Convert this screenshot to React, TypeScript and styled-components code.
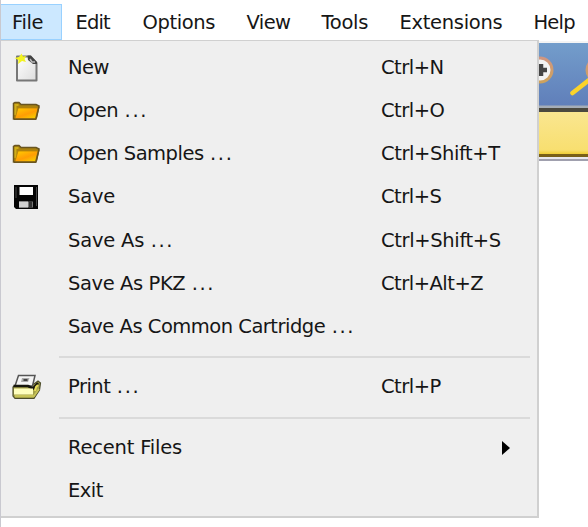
import React from 'react';
import styled, { createGlobalStyle } from 'styled-components';

const Global = createGlobalStyle`
  * { box-sizing: border-box; }
  body { margin: 0; background: #fff; overflow: hidden; }
`;

const Window = styled.div`
  position: relative;
  width: 588px;
  height: 527px;
  overflow: hidden;
  background: #fff;
  color: #161616;
  font: 19.5px/24px 'DejaVu Sans', sans-serif;
  border-left: 1px solid #c9c9d0;
`;

const MenuBar = styled.nav`
  display: flex;
  height: 43px;
  padding-top: 4px;
  margin-left: -1px;
  border-bottom: 2px solid #f4f4f4;
`;

const MenuTitle = styled.div<{ $width: number; $active?: boolean }>`
  flex: none;
  width: ${p => p.$width}px;
  height: 36px;
  padding: ${p => (p.$active ? '6px 0 0 12px' : '7px 0 0 14px')};
  white-space: nowrap;
  background: ${p => (p.$active ? '#cce8ff' : 'transparent')};
  border: ${p => (p.$active ? '1.5px solid #99d1ff' : '0')};
  border-left-width: 0;
`;

const Label = styled.span<{ $spacing?: number }>`
  letter-spacing: ${p => p.$spacing ?? -0.5}px;
  white-space: pre;
`;

const Dots = styled.span`
  margin-left: 6.5px;
  letter-spacing: 1.6px;
`;

const ToolStrip = styled.div`
  display: flex;
  justify-content: flex-end;
  height: 65px;
  background: linear-gradient(#739dcb, #607fba 62px, #a5adb7 63px);
`;

const YellowStrip = styled.div`
  height: 49px;
  border-top: 4px solid #4b493f;
  border-bottom: 3px solid #786019;
  background: linear-gradient(#fae690, #f8df70 38px, #efce36);
`;

const StripEdge = styled.div`
  height: 4px;
  border-bottom: 2px solid #a0a0ae;
  background: #e8e8ee;
`;

const Popup = styled.div`
  position: absolute;
  top: 40px;
  left: -1px;
  width: 539px;
  height: 478px;
  padding-top: 5.4px;
  background: #efefef;
  border: 2px solid #d0d0d0;
  border-top-width: 1px;
  border-left: 1px solid #ddd;
`;

const Row = styled.div`
  display: grid;
  grid-template-columns: 67px 313px 1fr;
  align-items: center;
  height: 43.15px;
`;

const IconCell = styled.div`
  display: flex;
  padding-left: 10px;
`;

const Arrow = styled.div`
  margin-left: 121px;
  width: 0;
  border-left: 8px solid #000;
  border-top: 7px solid transparent;
  border-bottom: 7px solid transparent;
`;

const Separator = styled.div`
  height: 17.5px;
  margin: 0 7px 0 58px;
  display: flex;
  align-items: center;
  &::after { content: ''; flex: 1; height: 2px; background: #dadada; }
`;

const NewIcon = () => (
  <svg width="30" height="32" viewBox="0 0 30 32">
    <defs><linearGradient id="page" x2="1" y2="1"><stop stopColor="#fff" /><stop offset="1" stopColor="#ddd" /></linearGradient></defs>
    <path d="M6 4.5H19L25.5 11V28.5H6Z" fill="url(#page)" stroke="#777" strokeWidth="2" strokeLinejoin="round" />
    <path d="M16.5 3.5H20L26 10V12H22L17 8Z" fill="#444" />
    <path d="M19 7L21 10H24" fill="none" stroke="#bbb" strokeWidth="1.5" />
    <path d="M10.5 1.5L12 4.5L15 4L13.5 7L15 10L11 9L7 12L7.5 8L3.5 6L8 5Z" fill="#f3f321" />
  </svg>
);

const FolderIcon = () => (
  <svg width="30" height="30" viewBox="0 0 30 30">
    <defs><linearGradient id="folder" x2=".8" y2="1"><stop stopColor="#ffd000" /><stop offset=".6" stopColor="#ff9d05" /><stop offset="1" stopColor="#f5cd00" /></linearGradient></defs>
    <path d="M2.5 23V7.5L4 6.5H8L10 8.5H25L28 10L25.5 21.5L24.5 23Z" fill="#aa820f" stroke="#695521" strokeWidth="1.5" />
    <path d="M4.5 19V9H7.5" fill="none" stroke="#d0ae19" strokeWidth="2" />
    <path d="M7 12H27L24.5 22.5H4Z" fill="url(#folder)" stroke="#b78109" strokeWidth=".8" />
    <path d="M3 23.3H24.8L28 10.5" fill="none" stroke="#695521" strokeWidth="1.4" />
  </svg>
);

const SaveIcon = () => (
  <svg width="30" height="32" viewBox="0 0 30 32">
    <path d="M3 4H27V28H5L3 26Z" fill="#050505" />
    <path d="M8.5 6H22V14H8.5Z" fill="#fff" />
    <path d="M5 6V17M25.5 6V25" stroke="#484848" />
    <path d="M8 20.5H22V26.5H8Z" fill="#777" />
    <path d="M8 20.5H17V26.5H8Z" fill="#d0d0d0" />
    <path d="M18 20.5H21V26.5H18Z" fill="#333" />
  </svg>
);

const PrintIcon = () => (
  <svg width="32" height="31" viewBox="0 0 32 31">
    <path d="M2 15L6 12H23L27 9L29.5 11L28.5 18L23 26.5H4L2 24Z" fill="#a5a249" stroke="#4d4d2b" strokeWidth="1.2" />
    <path d="M7.5 3.5H24L21.5 14H4Z" fill="#f5f5f5" stroke="#555" strokeWidth="1.5" />
    <path d="M11 6H18.5L17 10H10Z" fill="#aaa" />
    <path d="M12.5 8H16.5" stroke="#444" strokeWidth="2" />
    <path d="M2.5 14H17L22 16.5L27 11" fill="none" stroke="#17170f" strokeWidth="2.6" />
    <path d="M3 16.5H22V22.5H3Z" fill="#ffffbe" />
    <path d="M4 24H23L28 17" fill="none" stroke="#c8c458" strokeWidth="1.8" />
    <path d="M24 19L25 15L27 13" fill="none" stroke="#e9dd58" strokeWidth="2" />
  </svg>
);

const ToolDrawing = () => (
  <svg width="60" height="63" viewBox="528 43 60 63">
    <defs><linearGradient id="rim" x2="0" y2="1"><stop stopColor="#cf9681" /><stop offset="1" stopColor="#cea25c" /></linearGradient></defs>
    <circle cx="540" cy="70" r="12" fill="#f3f3f3" stroke="url(#rim)" strokeWidth="3" />
    <path d="M534 70H547M541 64V76" stroke="#454545" strokeWidth="4.5" />
    <circle cx="599" cy="70" r="12" fill="#f3f3f3" stroke="url(#rim)" strokeWidth="3" />
    <path d="M572.5 93L589 80" stroke="#fbd329" strokeWidth="4.5" strokeLinecap="round" />
  </svg>
);

const titles: [string, number, number][] = [
  ['File', 61.5, -0.35], ['Edit', 67, -0.9], ['Options', 104, -0.4], ['View', 75, -0.6],
  ['Tools', 78, -0.3], ['Extensions', 134, -0.3], ['Help', 69, -0.8],
];

type Item = { label: string; dots?: boolean; keys?: string; icon?: React.ReactNode; sub?: boolean; ls?: number; ks?: number };
const groups: Item[][] = [
  [
    { label: 'New', keys: 'Ctrl+N', icon: <NewIcon /> },
    { label: 'Open', dots: true, keys: 'Ctrl+O', icon: <FolderIcon /> },
    { label: 'Open Samples', dots: true, keys: 'Ctrl+Shift+T', ks: -0.4, icon: <FolderIcon /> },
    { label: 'Save', keys: 'Ctrl+S', ls: -0.2, icon: <SaveIcon /> },
    { label: 'Save As', dots: true, keys: 'Ctrl+Shift+S', ls: -0.2, ks: -0.35 },
    { label: 'Save As PKZ', dots: true, keys: 'Ctrl+Alt+Z', ls: -0.4 },
    { label: 'Save As Common Cartridge', dots: true },
  ],
  [{ label: 'Print', dots: true, keys: 'Ctrl+P', icon: <PrintIcon /> }],
  [{ label: 'Recent Files', sub: true, ls: -0.2 }, { label: 'Exit' }],
];

export default function App() {
  return (
    <Window>
      <Global />
      <MenuBar>
        {titles.map(([text, width, spacing], i) => (
          <MenuTitle key={text} $width={width} $active={i === 0}><Label $spacing={spacing}>{text}</Label></MenuTitle>
        ))}
      </MenuBar>
      <ToolStrip><ToolDrawing /></ToolStrip>
      <YellowStrip />
      <StripEdge />
      <Popup>
        {groups.map((group, i) => (
          <React.Fragment key={i}>
            {i > 0 && <Separator />}
            {group.map(item => (
              <Row key={item.label}>
                <IconCell>{item.icon}</IconCell>
                <Label $spacing={item.ls}>{item.label}{item.dots && <Dots>...</Dots>}</Label>
                {item.sub ? <Arrow /> : <Label $spacing={item.ks}>{item.keys}</Label>}
              </Row>
            ))}
          </React.Fragment>
        ))}
      </Popup>
    </Window>
  );
}
